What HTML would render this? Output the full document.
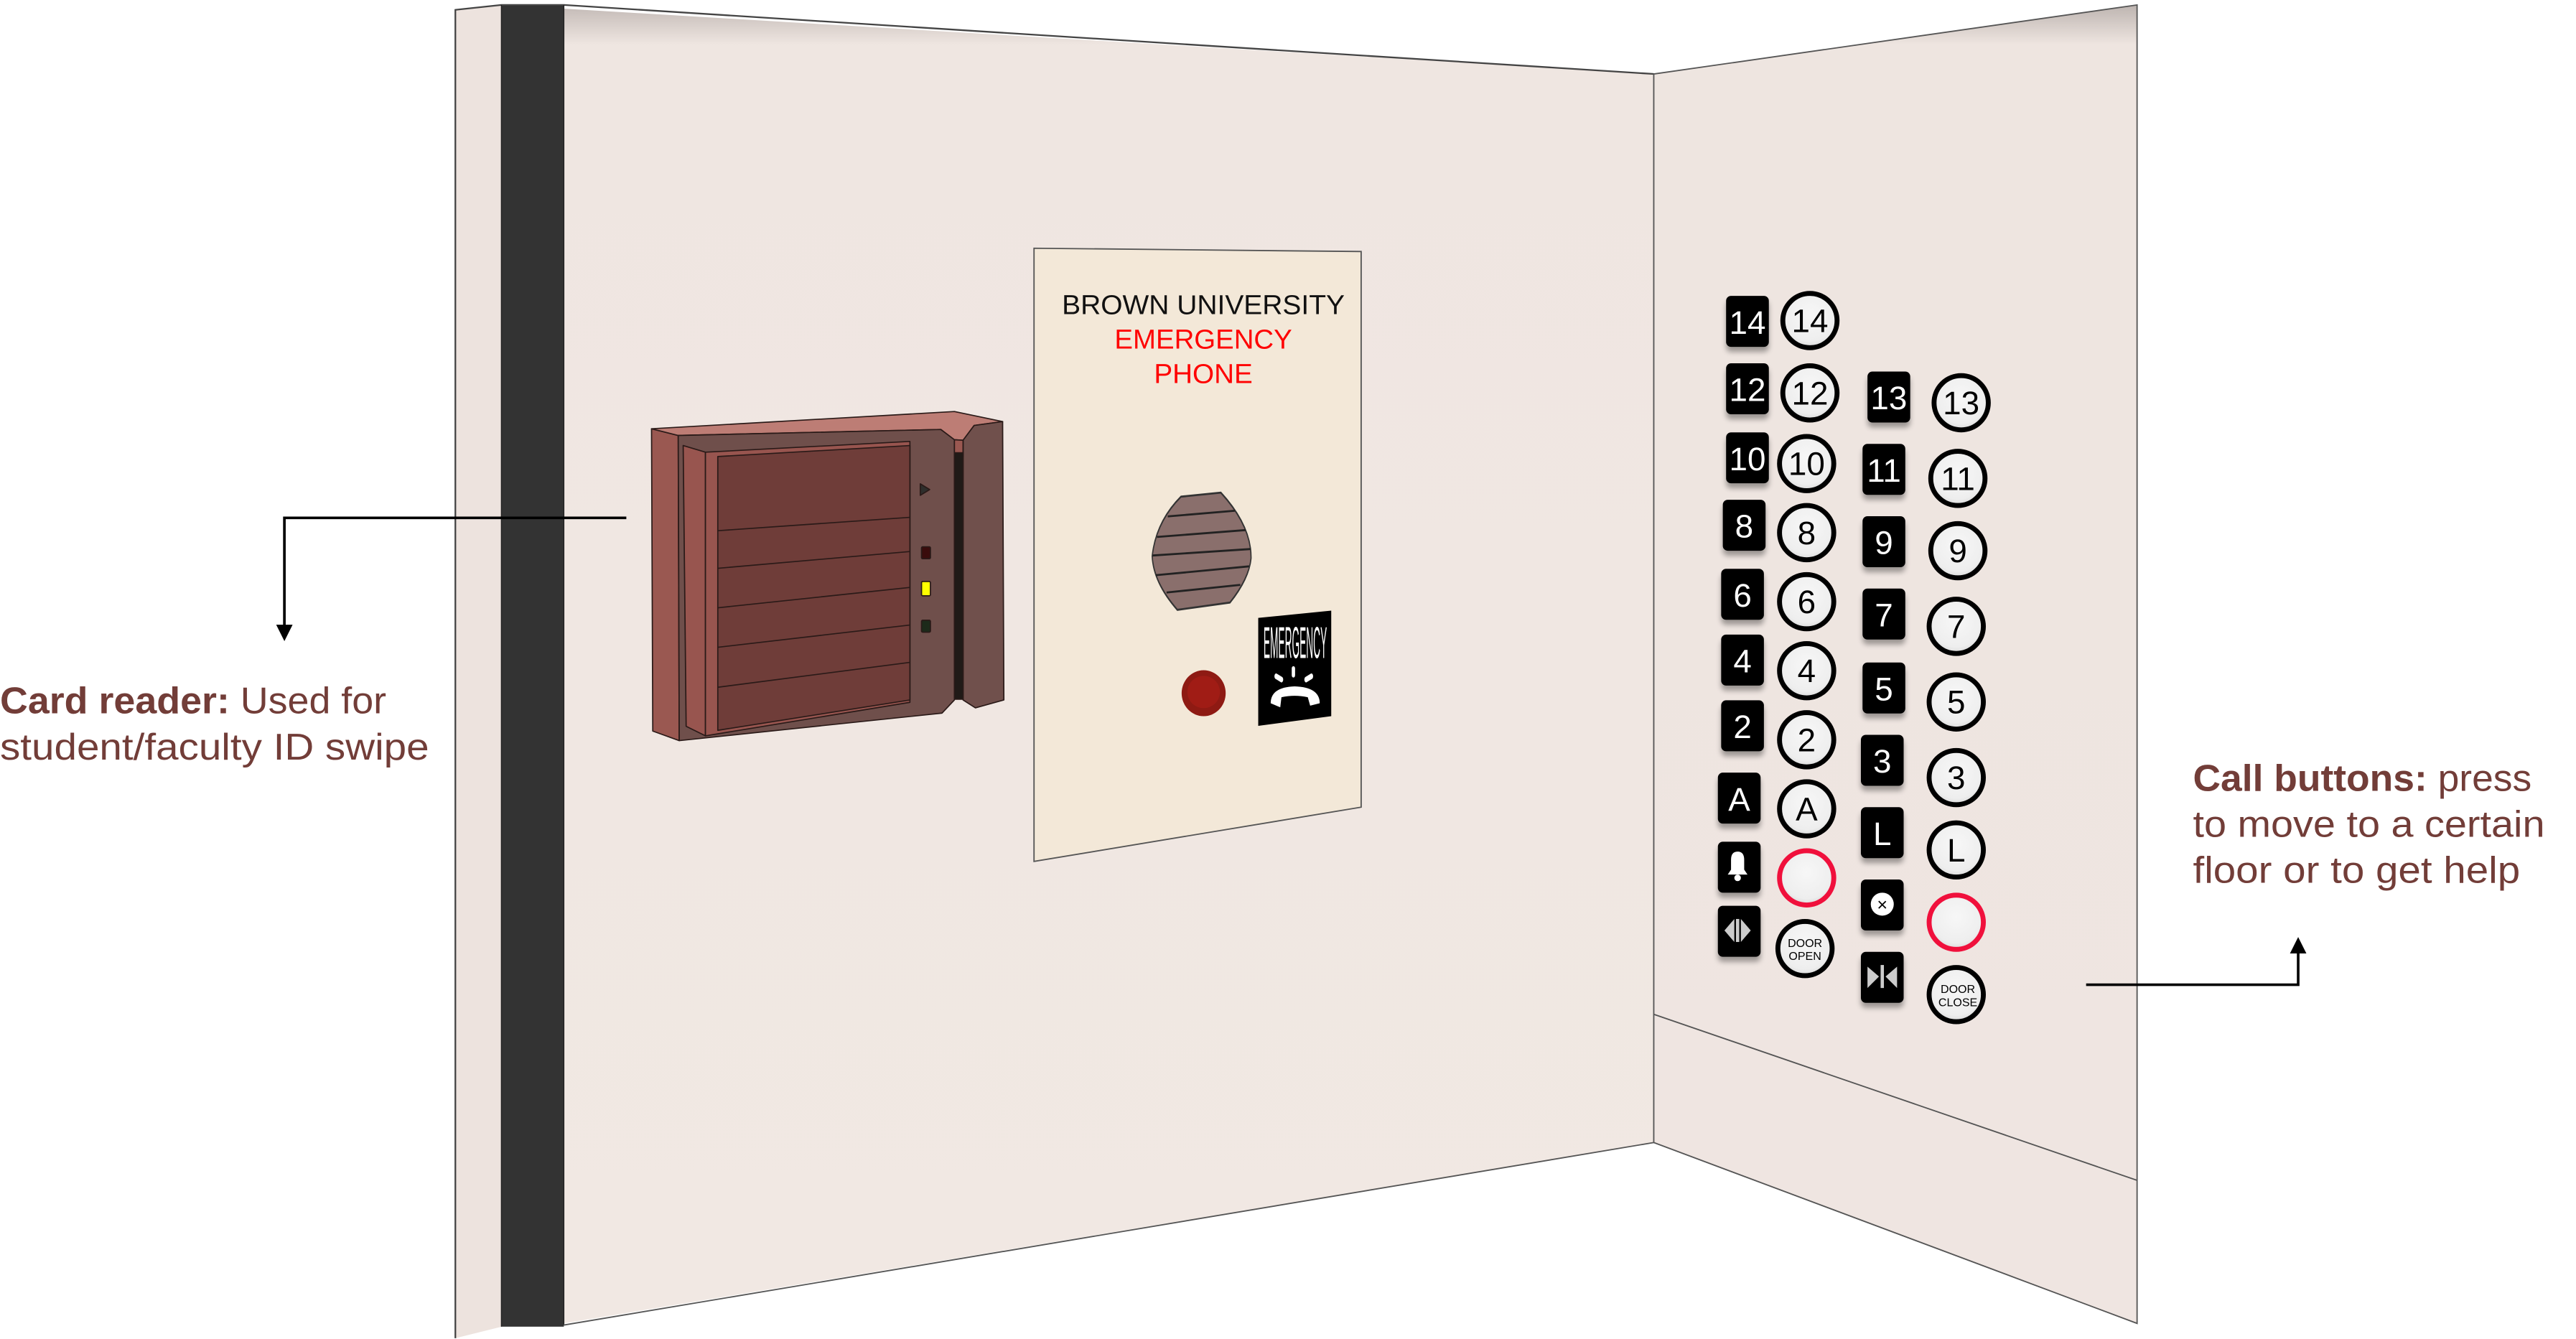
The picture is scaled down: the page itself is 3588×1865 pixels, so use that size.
<!DOCTYPE html>
<html><head><meta charset="utf-8"><style>
html,body{margin:0;padding:0;background:#fff;width:3588px;height:1865px;overflow:hidden}
svg{display:block}
text{font-family:"Liberation Sans",sans-serif}
</style></head><body>
<svg width="3588" height="1865" viewBox="0 0 1567 814.5" preserveAspectRatio="none" xmlns="http://www.w3.org/2000/svg">
<defs>
<linearGradient id="wt" x1="0" y1="0" x2="0" y2="1">
<stop offset="0" stop-color="#c2b9b5"/><stop offset="0.03" stop-color="#efe6e1"/><stop offset="1" stop-color="#f1e8e3"/>
</linearGradient>
<linearGradient id="wt2" x1="0" y1="0" x2="0" y2="1">
<stop offset="0" stop-color="#bdb4b0"/><stop offset="0.03" stop-color="#eee5e0"/><stop offset="1" stop-color="#efe5e1"/>
</linearGradient>
<radialGradient id="bt" cx="0.5" cy="0.4" r="0.6">
<stop offset="0" stop-color="#f7f7f7"/><stop offset="0.8" stop-color="#eeeeee"/><stop offset="1" stop-color="#d9d9d9"/>
</radialGradient>
<filter id="sh" x="-50%" y="-50%" width="200%" height="200%">
<feGaussianBlur in="SourceAlpha" stdDeviation="1.6"/><feOffset dx="0" dy="3" result="b"/>
<feComponentTransfer><feFuncA type="linear" slope="0.35"/></feComponentTransfer>
<feMerge><feMergeNode/><feMergeNode in="SourceGraphic"/></feMerge>
</filter>
</defs>

<polygon points="277,6 305,3 1006,45 1006,695 343,805 305,807 277,814" fill="url(#wt)"/>
<polygon points="277,6 305,3 305,807 277,814" fill="#ede3de"/>
<rect x="305" y="3" width="38" height="804" fill="#333"/>
<polyline points="277,814 277,6 305,3 343,3 1006,45" fill="none" stroke="#444" stroke-width="1"/>
<line x1="305" y1="3" x2="305" y2="807" stroke="#222" stroke-width="0.6"/>
<line x1="343" y1="3" x2="343" y2="806" stroke="#222" stroke-width="0.6"/>
<line x1="343" y1="806" x2="1006" y2="695" stroke="#555" stroke-width="0.8"/>

<polygon points="1006,45 1300,3 1300,805 1006,695" fill="url(#wt2)"/>
<polyline points="1006,45 1300,3 1300,805 1006,695 1006,45" fill="none" stroke="#555" stroke-width="0.8"/>
<line x1="1006" y1="617" x2="1300" y2="718" stroke="#555" stroke-width="0.8"/>

<g transform="translate(384.3,244.5) scale(0.1504,0.1456)" stroke="#2a1a18" stroke-width="5" stroke-linejoin="round">
<polygon points="80,112 188,140 192,1415 85,1375" fill="#9a5851"/>
<polygon points="80,112 1305,40 1500,82 1385,98 1340,160 1305,158 1250,115 188,140" fill="#bd7d75"/>
<polygon points="188,140 1250,115 1305,158 1305,1245 1255,1300 192,1415" fill="#6f4f4b"/>
<polygon points="1340,160 1385,98 1500,82 1505,1245 1390,1278 1340,1245" fill="#70504c"/>
<polygon points="1305,158 1340,160 1340,228 1305,212" fill="#9a5851"/>
<rect x="1305" y="212" width="35" height="1030" fill="#201a17"/>
<polygon points="208,182 298,210 298,1395 220,1355" fill="#98554f"/>
<polygon points="298,210 1125,165 1125,1255 298,1395" fill="#98554f"/>
<polygon points="348,228 1125,182 1125,1245 348,1372" fill="#6f3d39"/>
<line x1="348" y1="538" x2="1125" y2="482"/>
<line x1="348" y1="695" x2="1125" y2="625"/>
<line x1="348" y1="860" x2="1125" y2="775"/>
<line x1="348" y1="1025" x2="1125" y2="932"/>
<line x1="348" y1="1192" x2="1125" y2="1088"/>
<polygon points="1167,342 1205,366 1167,390" fill="#2e2e2c"/>
<rect x="1172" y="605" width="36" height="50" rx="5" fill="#3a0c0c"/>
<rect x="1172" y="750" width="36" height="60" rx="5" fill="#ffff00"/>
<rect x="1172" y="912" width="36" height="50" rx="5" fill="#1c2a1a"/>
</g>

<polygon points="629,151 828,153 828,491 629,524" fill="#f3e8d8" stroke="#555" stroke-width="0.8"/>
<text x="732" y="191" font-size="16.5" text-anchor="middle" fill="#111" textLength="172" lengthAdjust="spacingAndGlyphs">BROWN UNIVERSITY</text>
<text x="732" y="212" font-size="16.5" text-anchor="middle" fill="#ff0000" textLength="108" lengthAdjust="spacingAndGlyphs">EMERGENCY</text>
<text x="732" y="233" font-size="16.5" text-anchor="middle" fill="#ff0000" textLength="60" lengthAdjust="spacingAndGlyphs">PHONE</text>
<g transform="translate(624.45,148.5) scale(0.1456,0.245)">
<path d="M645,627 L812,617 Q940,700 938,780 Q930,830 850,890 L630,908 Q530,840 525,775 Q540,690 645,627 Z" fill="#8a6f6c" stroke="#333" stroke-width="5"/>
<g stroke="#222" stroke-width="5">
<line x1="590" y1="676" x2="870" y2="662"/><line x1="545" y1="727" x2="915" y2="710"/>
<line x1="527" y1="773" x2="937" y2="757"/><line x1="540" y1="822" x2="930" y2="800"/>
<line x1="585" y1="865" x2="893" y2="846"/>
</g>
<ellipse cx="740" cy="1115" rx="92" ry="57" fill="#8e1a13"/>
<ellipse cx="740" cy="1112" rx="68" ry="40" fill="#a01c15"/>
<polygon points="968,928 1273,910 1273,1172 968,1196" fill="#000"/>
<text x="990" y="1028" font-size="110" fill="#fff" textLength="265" lengthAdjust="spacingAndGlyphs">EMERGENCY</text>
<g fill="#fff">
<rect x="1108" y="1048" width="14" height="28" rx="6"/>
<rect x="1035" y="1070" width="38" height="14" rx="7" transform="rotate(20 1054 1077)"/>
<rect x="1160" y="1070" width="38" height="14" rx="7" transform="rotate(-20 1179 1077)"/>
<path d="M1020,1140 Q1020,1100 1120,1098 Q1225,1100 1225,1140 L1185,1146 L1175,1125 Q1120,1118 1065,1125 L1060,1150 Z"/>
</g>
</g>

<g font-size="20" text-anchor="middle">
<g filter="url(#sh)" fill="#000">
<rect x="1050" y="180" width="26" height="31" rx="3"/>
<rect x="1050" y="221" width="26" height="31" rx="3"/>
<rect x="1050" y="263" width="26" height="31" rx="3"/>
<rect x="1048" y="304" width="26" height="31" rx="3"/>
<rect x="1047" y="346" width="26" height="31" rx="3"/>
<rect x="1047" y="386" width="26" height="31" rx="3"/>
<rect x="1047" y="426" width="26" height="31" rx="3"/>
<rect x="1045" y="470" width="26" height="31" rx="3"/>
<rect x="1045" y="512" width="26" height="31" rx="3"/>
<rect x="1045" y="551" width="26" height="31" rx="3"/>
<rect x="1136" y="226" width="26" height="31" rx="3"/>
<rect x="1133" y="270" width="26" height="31" rx="3"/>
<rect x="1133" y="314" width="26" height="31" rx="3"/>
<rect x="1133" y="358" width="26" height="31" rx="3"/>
<rect x="1133" y="403" width="26" height="31" rx="3"/>
<rect x="1132" y="447" width="26" height="31" rx="3"/>
<rect x="1132" y="491" width="26" height="31" rx="3"/>
<rect x="1132" y="535" width="26" height="31" rx="3"/>
<rect x="1132" y="579" width="26" height="31" rx="3"/>
</g>
<g fill="#fff">
<text x="1063" y="203">14</text><text x="1063" y="244">12</text><text x="1063" y="286">10</text>
<text x="1061" y="327">8</text><text x="1060" y="369">6</text><text x="1060" y="409">4</text>
<text x="1060" y="449">2</text><text x="1058" y="493">A</text>
<text x="1149" y="249">13</text><text x="1146" y="293">11</text><text x="1146" y="337">9</text>
<text x="1146" y="381">7</text><text x="1146" y="426">5</text><text x="1145" y="470">3</text>
<text x="1145" y="514">L</text>
</g>
<path d="M1051,532 L1063,532 L1061,529 L1061,523 Q1061,518 1057,518 Q1053,518 1053,523 L1053,529 Z" fill="#fff"/>
<circle cx="1057" cy="534" r="2" fill="#fff"/>
<polygon points="1049,566 1055,559 1055,573" fill="#ccc"/><polygon points="1065,566 1059,559 1059,573" fill="#ccc"/>
<rect x="1056" y="559" width="2" height="14" fill="#ccc"/>
<circle cx="1145" cy="550" r="7" fill="#fff"/>
<text x="1145" y="554" font-size="11" fill="#000">×</text>
<polygon points="1136,588 1143,594 1136,601" fill="#ccc"/><polygon points="1154,588 1147,594 1154,601" fill="#ccc"/>
<rect x="1144" y="587" width="2" height="14" fill="#ccc"/>

<g fill="url(#bt)" stroke="#000" stroke-width="3">
<circle cx="1101" cy="195" r="16.5"/><circle cx="1101" cy="239" r="16.5"/><circle cx="1099" cy="282" r="16.5"/>
<circle cx="1099" cy="324" r="16.5"/><circle cx="1099" cy="366" r="16.5"/><circle cx="1099" cy="408" r="16.5"/>
<circle cx="1099" cy="450" r="16.5"/><circle cx="1099" cy="492" r="16.5"/><circle cx="1098" cy="577" r="16.5"/>
<circle cx="1193" cy="245" r="16.5"/><circle cx="1191" cy="291" r="16.5"/><circle cx="1191" cy="335" r="16.5"/>
<circle cx="1190" cy="381" r="16.5"/><circle cx="1190" cy="427" r="16.5"/><circle cx="1190" cy="473" r="16.5"/>
<circle cx="1190" cy="517" r="16.5"/><circle cx="1190" cy="605" r="16.5"/>
<circle cx="1099" cy="534" r="16.5" stroke="#f0103c"/><circle cx="1190" cy="561" r="16.5" stroke="#f0103c"/>
</g>
<g fill="#000">
<text x="1101" y="202">14</text><text x="1101" y="246">12</text><text x="1099" y="289">10</text>
<text x="1099" y="331">8</text><text x="1099" y="373">6</text><text x="1099" y="415">4</text>
<text x="1099" y="457">2</text><text x="1099" y="499">A</text>
<text x="1193" y="252">13</text><text x="1191" y="298">11</text><text x="1191" y="342">9</text>
<text x="1190" y="388">7</text><text x="1190" y="434">5</text><text x="1190" y="480">3</text>
<text x="1190" y="524">L</text>
<text x="1098" y="576" font-size="7">DOOR</text><text x="1098" y="584" font-size="7">OPEN</text>
<text x="1191" y="604" font-size="7">DOOR</text><text x="1191" y="612" font-size="7">CLOSE</text>
</g>
</g>

<polyline points="381,315 173,315 173,382" fill="none" stroke="#000" stroke-width="1.6"/>
<polygon points="168,380 178,380 173,390" fill="#000"/>
<polyline points="1269,599 1398,599 1398,578" fill="none" stroke="#000" stroke-width="1.6"/>
<polygon points="1393,580 1403,580 1398,570" fill="#000"/>

<g fill="#723d38" font-size="22.5">
<text x="0" y="434" textLength="235" lengthAdjust="spacingAndGlyphs"><tspan font-weight="bold">Card reader:</tspan> Used for</text>
<text x="0" y="462" textLength="261" lengthAdjust="spacingAndGlyphs">student/faculty ID swipe</text>
<text x="1334" y="481" textLength="206" lengthAdjust="spacingAndGlyphs"><tspan font-weight="bold">Call buttons:</tspan> press</text>
<text x="1334" y="509" textLength="214" lengthAdjust="spacingAndGlyphs">to move to a certain</text>
<text x="1334" y="537" textLength="199" lengthAdjust="spacingAndGlyphs">floor or to get help</text>
</g>
</svg>
</body></html>
